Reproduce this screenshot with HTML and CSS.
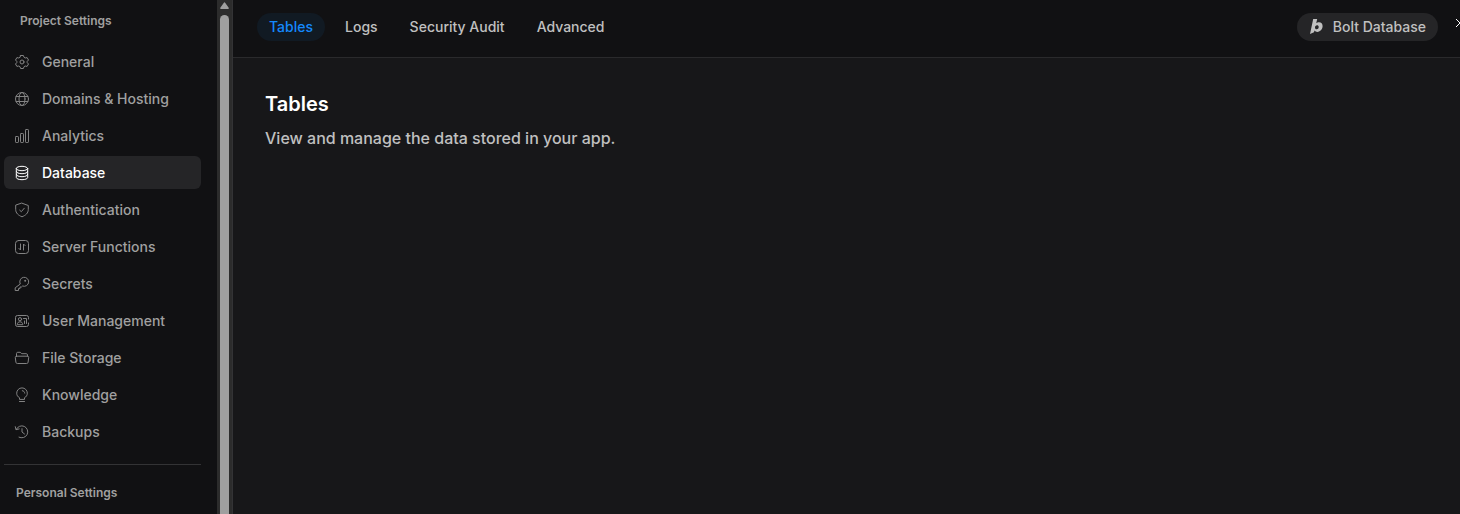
FILE: index.html
```html
<!DOCTYPE html>
<html lang="en">
<head>
<meta charset="utf-8">
<title>Project Settings</title>
<link rel="stylesheet" href="styles.css">
</head>
<body>
<div class="app">
  <aside class="sidebar">
    <h2 class="group-title group-title-project">Project Settings</h2>
    <nav class="menu">
      <a class="item" href="#general"><svg class="icon" viewBox="0 0 16 16"><path d="M6.6 1.5h2.8l.6 1.8 1.2.7 1.9-.4 1.4 2.4L13.2 7.4v1.2l1.3 1.4-1.4 2.4-1.9-.4-1.2.7-.6 1.8H6.6L6 12.700l-1.200-.7-1.900.4L1.500 10l1.300-1.400V7.400L1.500 6l1.400-2.400 1.900.4L6 3.300z"/><circle cx="8" cy="8" r="2"/></svg>General</a>
      <a class="item" href="#domains"><svg class="icon" viewBox="0 0 16 16"><circle cx="8" cy="8" r="6.500"/><ellipse cx="8" cy="8" rx="3" ry="6.500"/><path d="M2.200 5.500h11.600M2.200 10.500h11.600"/></svg>Domains &amp; Hosting</a>
      <a class="item" href="#analytics"><svg class="icon" viewBox="0 0 16 16"><rect x="1.500" y="8.500" width="3" height="6" rx=".7"/><rect x="6.500" y="5.500" width="3" height="9" rx=".7"/><rect x="11.500" y="1.500" width="3" height="13" rx=".7"/></svg>Analytics</a>
      <a class="item item-active" href="#database" aria-current="page"><svg class="icon" viewBox="0 0 16 16"><ellipse cx="8" cy="3.500" rx="5.700" ry="2.200"/><path d="M2.300 3.500v9c0 1.200 2.500 2.200 5.700 2.200s5.700-1 5.700-2.200v-9M2.300 6.500c0 1.200 2.500 2.200 5.700 2.200s5.700-1 5.700-2.200M2.300 9.500c0 1.200 2.500 2.200 5.700 2.200s5.700-1 5.700-2.200"/></svg>Database</a>
      <a class="item" href="#authentication"><svg class="icon" viewBox="0 0 16 16"><path d="M8 1.200 14.300 3.500v4c0 3.600-2.600 5.800-6.300 7.300C4.300 13.300 1.700 11.100 1.700 7.500v-4z"/><path d="m5.700 8.200 1.600 1.500 3-3.500"/></svg>Authentication</a>
      <a class="item" href="#functions"><svg class="icon" viewBox="0 0 16 16"><rect x="1.500" y="1.500" width="13" height="13" rx="3"/><path d="M6.500 5v6L4.900 9.400M9.500 11V5l1.600 1.600"/></svg>Server Functions</a>
      <a class="item" href="#secrets"><svg class="icon" viewBox="0 0 16 16"><path d="M6.100 7.700A4.500 4.500 0 1 1 8.600 10L7.500 11H6v1.600H4.500v1.900H1.200v-2.300z"/><circle class="dot" cx="11.200" cy="4.800" r="1"/></svg>Secrets</a>
      <a class="item" href="#users"><svg class="icon" viewBox="0 0 16 16"><path d="M14.500 6V4.500a2 2 0 0 0-2-2h-9a2 2 0 0 0-2 2v7a2 2 0 0 0 2 2h9a2 2 0 0 0 2-2V10"/><circle cx="6" cy="6.200" r="1.600"/><path d="M3.200 11.300c.2-1.600 1.200-2.500 2.800-2.500s2.600.9 2.800 2.500zM9.500 5.500h3v5M10.500 8v2.500"/></svg>User Management</a>
      <a class="item" href="#storage"><svg class="icon" viewBox="0 0 16 16"><path d="M2.500 6.300V3.500c0-.7.500-1.200 1.200-1.200h2.500l1.600 1.400h4.500c.7 0 1.200.5 1.200 1.200v1.400"/><path d="M2.500 6.200h11c.8 0 1.300.5 1.200 1.300l-.6 4.700c-.1.900-.7 1.300-1.500 1.300H3.400c-.8 0-1.400-.4-1.500-1.300l-.6-4.700c-.1-.8.400-1.300 1.200-1.300z"/></svg>File Storage</a>
      <a class="item" href="#knowledge"><svg class="icon" viewBox="0 0 16 16"><path d="M5.500 12v-1.300C3.700 9.800 2.700 8.200 2.700 6.200a5.300 5.300 0 0 1 10.600 0c0 2-1 3.600-2.800 4.500V12zM5.500 14.500h5M8.300 3.700c1.400.1 2.300 1 2.400 2.400"/></svg>Knowledge</a>
      <a class="item" href="#backups"><svg class="icon" viewBox="0 0 16 16"><path d="M2.200 5.500A6 6 0 1 1 5 13.200M1.300 2.700l.7 3 3.200-.8M8 4.700V8l2.500 2"/></svg>Backups</a>
    </nav>
    <hr class="rule">
    <h2 class="group-title">Personal Settings</h2>
  </aside>
  <div class="scrollbar" aria-hidden="true">
    <svg class="arrow" viewBox="0 0 9 7"><path d="M3.700.9Q4.500-.3 5.300.9L8.700 5.700Q9.200 7 8 7H1Q-.2 7 .3 5.700z"/></svg>
    <div class="thumb"></div>
  </div>
  <main class="main">
    <header class="header">
      <nav class="tabs">
        <a class="tab tab-active" href="#tables" aria-current="page">Tables</a>
        <a class="tab" href="#logs">Logs</a>
        <a class="tab" href="#audit">Security Audit</a>
        <a class="tab" href="#advanced">Advanced</a>
      </nav>
      <button class="provider" type="button"><svg class="bolt" viewBox="0 0 13 15"><path fill-rule="evenodd" d="M3.200 0h4L6.200 4.300C7.200 3.500 8 3.300 9 3.300c2.300 0 3.600 1.500 3.600 3.800 0 3.200-2.300 5.800-5.200 5.800-1.300 0-2.300-.5-2.900-1.400l-.5 1.700L0 15zM7 6.200c-1.200 0-2 1-2 2.200s.6 1.800 1.600 1.800c1.200 0 2.100-1 2.100-2.300C8.700 6.900 8 6.200 7 6.200z"/></svg>Bolt Database</button>
      <button class="close" type="button" aria-label="Close"><svg class="cross" viewBox="0 0 10 10"><path d="m1 1 8 8M9 1 1 9"/></svg></button>
    </header>
    <section class="content">
      <h1 class="title">Tables</h1>
      <p class="lead">View and manage the data stored in your app.</p>
    </section>
  </main>
</div>
</body>
</html>
```
FILE: styles.css
```css
* { box-sizing: border-box; }
body {
  margin: 0;
  background: #171719;
  color: #c0c0c0;
  font-family: Inter, "Liberation Sans", sans-serif;
  font-size: 14px;
  font-weight: 500;
  line-height: 20px;
}
a { color: inherit; text-decoration: none; }
.app { display: flex; height: 100vh; overflow: hidden; }
.sidebar {
  flex: none;
  width: 217px;
  padding: 12px 16px 0 4px;
  background: #111113;
  color: #a0a0a0;
  overflow: hidden;
}
.group-title {
  margin: 0;
  padding-left: 12px;
  font-size: 12px;
  font-weight: 600;
  line-height: 18px;
}
.group-title-project { padding-left: 16px; }
.menu { display: flex; flex-direction: column; gap: 4px; margin-top: 15px; }
.item {
  display: flex;
  align-items: center;
  gap: 12px;
  height: 33px;
  padding: 0 10px;
  border-radius: 6px;
}
.item-active { background: #252527; color: #fff; }
.icon {
  width: 16px;
  height: 16px;
  fill: none;
  stroke: currentColor;
  stroke-width: 1;
  stroke-linecap: round;
  stroke-linejoin: round;
  opacity: 0.8;
}
.item-active .icon { opacity: 1; }
.dot { fill: currentColor; stroke: none; }
.rule { margin: 16px 0 19px; border: 0; border-top: 1px solid #333335; }
.scrollbar {
  display: flex;
  flex: none;
  flex-direction: column;
  align-items: center;
  gap: 6px;
  width: 16px;
  padding: 2px 0 0;
  border-right: 1px solid #333335;
  background: #2c2c2c;
}
.arrow { flex: none; width: 9px; height: 7px; fill: #9f9f9f; }
.thumb { flex: 1; width: 9px; border-radius: 5px 5px 0 0; background: #9f9f9f; }
.main { flex: 1; min-width: 0; }
.header {
  display: flex;
  align-items: center;
  height: 58px;
  padding: 0 0 4px 24px;
  border-bottom: 1px solid #2a2a2c;
  background: #111113;
  overflow: hidden;
}
.tabs { display: flex; gap: 8px; margin-right: auto; }
.tab { padding: 4px 12px; border-radius: 14px; }
.tab-active { background: #111a23; color: #1488fc; }
.provider {
  display: flex;
  align-items: center;
  gap: 10px;
  padding: 4px 12px 4px 13px;
  border: 0;
  border-radius: 14px;
  background: #252527;
  color: inherit;
  font: inherit;
}
.bolt { width: 13px; height: 15px; fill: currentColor; }
.close {
  display: flex;
  margin: 0 -5px 8px 17px;
  padding: 0;
  border: 0;
  background: none;
  color: #fff;
}
.cross { width: 10px; height: 10px; fill: none; stroke: currentColor; stroke-width: 1; }
.content { padding: 32px; }
.title { margin: 0; color: #fff; font-size: 20px; font-weight: 600; line-height: 28px; }
.lead { margin: 8px 0 0; font-size: 16px; font-weight: 500; line-height: 24px; }
```
